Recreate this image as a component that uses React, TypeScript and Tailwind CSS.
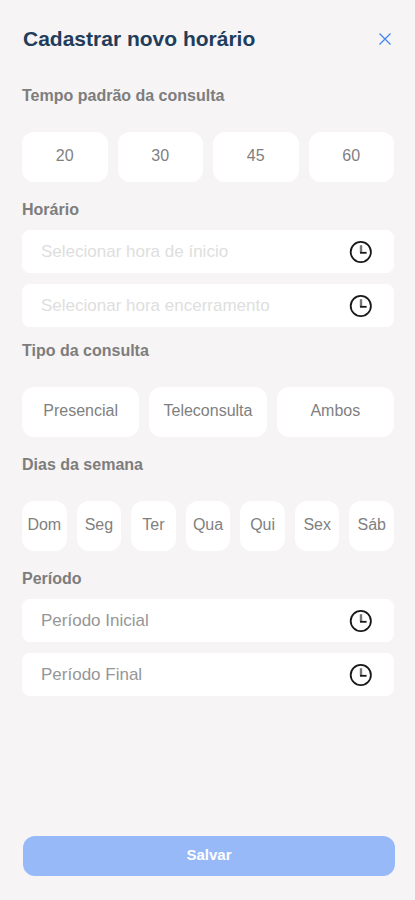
import { useState } from "react";

const durations = ["20", "30", "45", "60"];
const types = ["Presencial", "Teleconsulta", "Ambos"];
const weekDays = ["Dom", "Seg", "Ter", "Qua", "Qui", "Sex", "Sáb"];

function ClockIcon() {
  return (
    <svg viewBox="0 0 24 24" className="size-6 shrink-0" fill="none" aria-hidden="true">
      <circle cx="11.8" cy="12" r="10.1" stroke="#181818" strokeWidth="1.8" />
      <path d="M12 5.2v7.4" stroke="#777" strokeWidth="2.4" />
      <path d="M11 12.8h6.6" stroke="#181818" strokeWidth="1.8" />
    </svg>
  );
}

interface OptionGroupProps {
  id: string;
  title: string;
  options: string[];
  multiple?: boolean;
}

function OptionGroup({ id, title, options, multiple }: OptionGroupProps) {
  const [selected, setSelected] = useState<string[]>([]);

  function toggle(option: string) {
    if (selected.includes(option)) {
      setSelected(selected.filter((item) => item !== option));
    } else {
      setSelected(multiple ? [...selected, option] : [option]);
    }
  }

  return (
    <section role="group" aria-labelledby={id}>
      <h2 id={id} className="mb-6 text-base font-bold text-[#7d7d7d]">
        {title}
      </h2>
      <div className="flex gap-2.5">
        {options.map((option) => (
          <button
            key={option}
            type="button"
            aria-pressed={selected.includes(option)}
            onClick={() => toggle(option)}
            className="h-[50px] min-w-0 flex-1 cursor-pointer rounded-xl bg-white pb-0.5 text-base text-[#7f7f7f] aria-pressed:bg-[#97b9f8] aria-pressed:text-white"
          >
            {option}
          </button>
        ))}
      </div>
    </section>
  );
}

interface TimeFieldProps {
  id: string;
  label: string;
  inputClass: string;
}

function TimeField({ id, label, inputClass }: TimeFieldProps) {
  return (
    <label htmlFor={id} className="flex h-[43px] items-center rounded-lg bg-white pr-[21px]">
      <input
        id={id}
        type="text"
        aria-label={label}
        placeholder={label}
        className={`h-full min-w-0 flex-1 bg-transparent pl-[19px] text-[17px] text-gray-600 outline-none ${inputClass}`}
      />
      <ClockIcon />
    </label>
  );
}

export default function App() {
  return (
    <main className="flex min-h-screen flex-col bg-[#f6f4f5] px-5 pt-[23px] pb-6 font-['Liberation_Sans',Arial,sans-serif]">
      <header className="flex h-8 items-center justify-between pl-[3px]">
        <h1 className="text-[21px] font-bold text-[#213d5b]">Cadastrar novo horário</h1>
        <button type="button" aria-label="Fechar" className="cursor-pointer p-1 text-[#4285f4]">
          <svg viewBox="0 0 12 12" className="size-3" fill="none" stroke="currentColor" strokeWidth="1.3">
            <path d="M.5.5l11 11M11.5.5l-11 11" />
          </svg>
        </button>
      </header>

      <form className="mt-[29px] flex flex-1 flex-col" onSubmit={(e) => e.preventDefault()}>
        <div className="flex flex-col gap-4 pr-px pl-0.5">
          <OptionGroup id="tempo" title="Tempo padrão da consulta" options={durations} />

          <section>
            <h2 className="mb-2 text-base font-bold text-[#7d7d7d]">Horário</h2>
            <div className="flex flex-col gap-[11px]">
              <TimeField id="inicio" label="Selecionar hora de ínicio" inputClass="placeholder:text-[#dedede]" />
              <TimeField id="fim" label="Selecionar hora encerramento" inputClass="placeholder:text-[#dedede]" />
            </div>
          </section>

          <div className="-mt-1">
            <OptionGroup id="tipo" title="Tipo da consulta" options={types} />
          </div>

          <OptionGroup id="dias" title="Dias da semana" options={weekDays} multiple />

          <section>
            <h2 className="mb-2 text-base font-bold text-[#7d7d7d]">Período</h2>
            <div className="flex flex-col gap-[11px]">
              <TimeField id="periodo-inicial" label="Período Inicial" inputClass="placeholder:text-[#969696]" />
              <TimeField id="periodo-final" label="Período Final" inputClass="placeholder:text-[#969696]" />
            </div>
          </section>
        </div>

        <div className="mt-auto pt-8 pl-[3px]">
          <button
            type="submit"
            className="h-10 w-full cursor-pointer rounded-xl bg-[#97b9f8] pb-0.5 text-[15px] font-bold text-white"
          >
            Salvar
          </button>
        </div>
      </form>
    </main>
  );
}
